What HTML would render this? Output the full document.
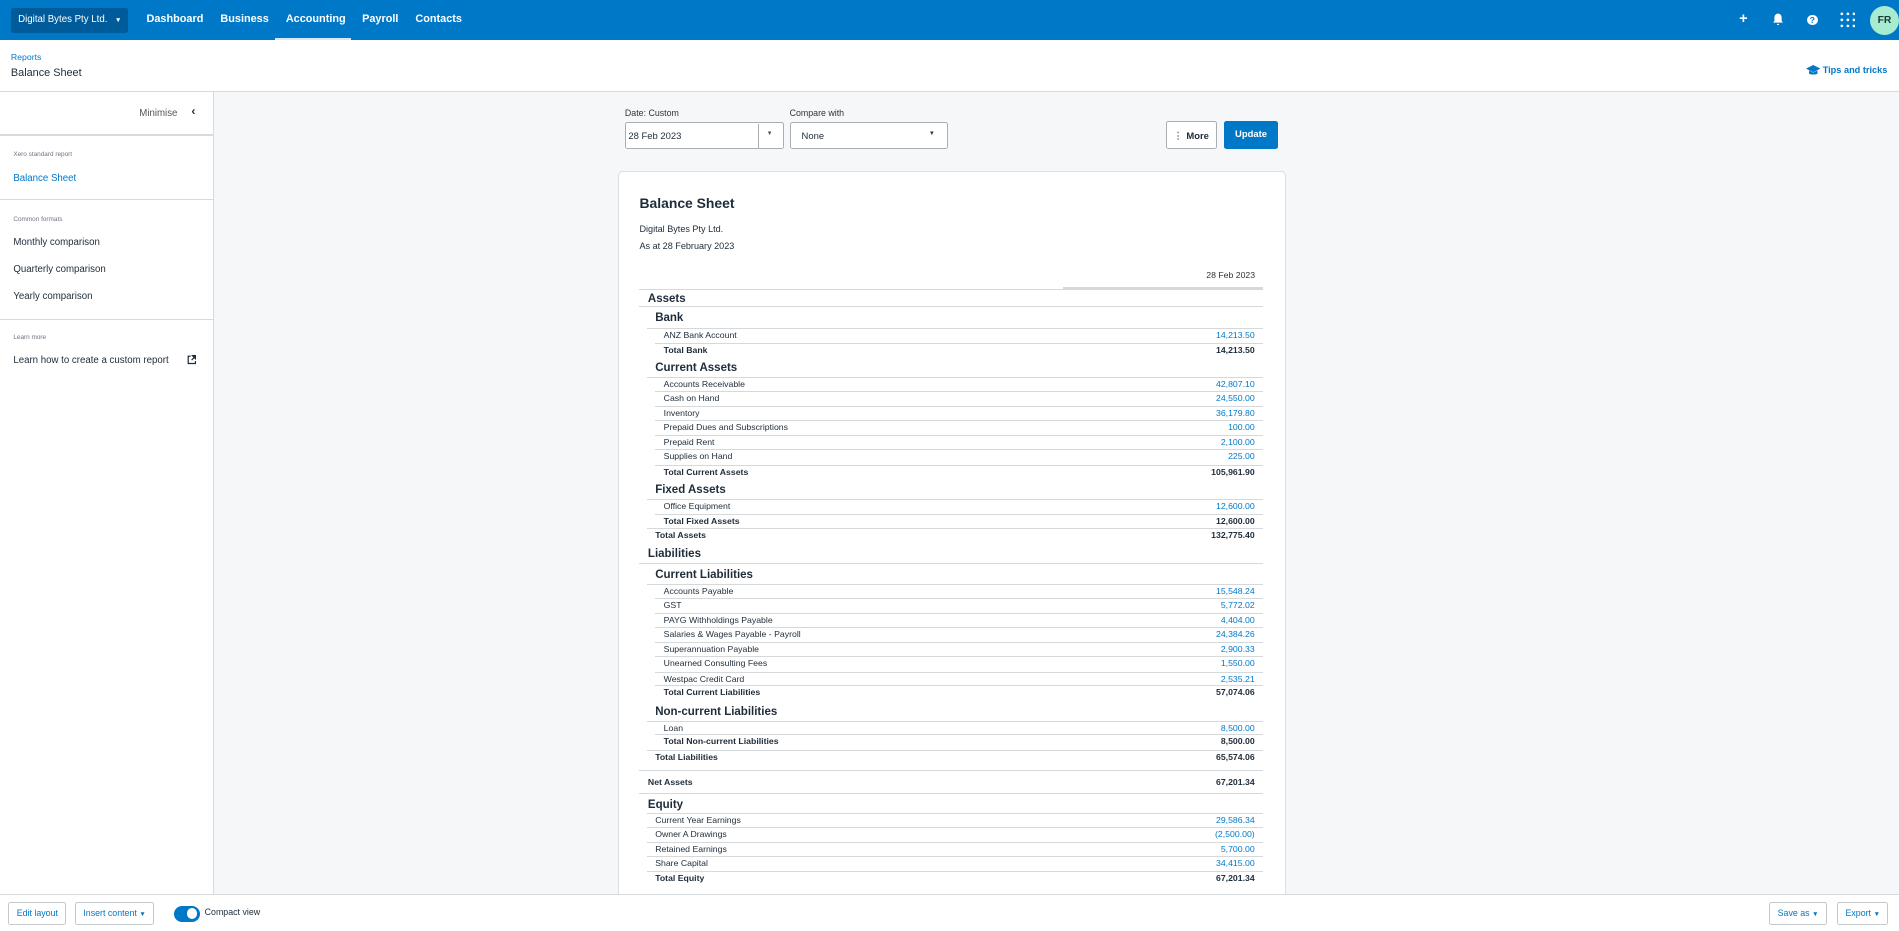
<!DOCTYPE html>
<html><head><meta charset="utf-8"><style>
*{box-sizing:border-box;margin:0;padding:0}
html,body{width:1899px;height:931px;overflow:hidden}
body{font-family:"Liberation Sans",Arial,sans-serif;color:#1e2c3a;background:#fff}
#w{position:relative;width:1568px;height:768px;zoom:1.21109;overflow:hidden;background:#f6f7f8}
.a{position:absolute}
.nav{left:0;top:0;width:1568px;height:33px;background:#0078c8}
.nl{color:#fff;font-size:9px;font-weight:bold;top:11px}
.hdr{left:0;top:33px;width:1568px;height:43px;background:#fff;border-bottom:1px solid #d8dbde}
.side{left:0;top:76px;width:177px;height:662px;background:#fff;border-right:1px solid #d8dbde}
.hl{left:0;width:176px;height:1px;background:#d8dbde}
.st{font-size:5.3px;color:#6b7580;left:11px}
.si{font-size:8px;color:#1e2c3a;left:11px}
.lbl{font-size:7.3px;color:#333}
.inp{background:#fff;border:1px solid #a8aeb4;border-radius:2px;height:22px;font-size:7.8px;color:#1e2c3a}
.card{left:510px;top:141px;width:552px;height:640px;background:#fff;border:1px solid #dcdfe3;border-radius:4px}
.r{position:absolute;right:525px;border-top:1px solid #d6d9dc;font-size:7.2px;color:#1e2c3a;line-height:11px;white-space:nowrap}
.r span{position:absolute;right:7px;color:#0078c8}
.r.t{font-weight:bold}
.r.t span{color:#1e2c3a}
.r.h{font-size:9.5px;font-weight:bold}
.r.nl2{border-top:none}
.foot{left:0;top:738px;width:1568px;height:30px;background:#fff;border-top:1px solid #d8dbde}
.btn{background:#fff;border:1px solid #c3c8cd;border-radius:2px;height:19px;font-size:7.3px;color:#0078c8;line-height:17px;padding:0 6px;top:745px}
</style></head><body><div id="w">
<div class="a nav"></div>
<div class="a" style="left:9px;top:7px;width:97px;height:20px;background:#005b9a;border-radius:2px;color:#fff;font-size:8px;line-height:20px;padding-left:6px">Digital Bytes Pty Ltd. <span style="font-size:5.5px;margin-left:4px">▼</span></div>
<div class="a nl" style="left:121px">Dashboard</div>
<div class="a nl" style="left:182px">Business</div>
<div class="a nl" style="left:236px">Accounting</div>
<div class="a nl" style="left:299px">Payroll</div>
<div class="a nl" style="left:343px">Contacts</div>
<div class="a" style="left:227px;top:31px;width:63px;height:2px;background:#d6e8f5"></div>
<div class="a" style="left:1436px;top:9px;color:#fff;font-size:12px;font-weight:bold">+</div>
<svg class="a" style="left:1463px;top:11px" width="10" height="11" viewBox="0 0 10 11"><path d="M5 0.5c-2 0-3 1.5-3 3.5v2.5L1 8h8L8 6.5V4c0-2-1-3.5-3-3.5z M4 9h2a1 1 0 0 1-2 0z" fill="#fff"/></svg>
<div class="a" style="left:1492px;top:12px;width:9px;height:9px;border-radius:50%;background:#fff;color:#0078c8;font-size:7px;font-weight:bold;text-align:center;line-height:9px">?</div>
<svg class="a" style="left:1519px;top:10px" width="13" height="13" viewBox="0 0 13 13" fill="#fff"><circle cx="1.5" cy="1.5" r="1.1"/><circle cx="6.5" cy="1.5" r="1.1"/><circle cx="11.5" cy="1.5" r="1.1"/><circle cx="1.5" cy="6.5" r="1.1"/><circle cx="6.5" cy="6.5" r="1.1"/><circle cx="11.5" cy="6.5" r="1.1"/><circle cx="1.5" cy="11.5" r="1.1"/><circle cx="6.5" cy="11.5" r="1.1"/><circle cx="11.5" cy="11.5" r="1.1"/></svg>
<div class="a" style="left:1544px;top:5px;width:24px;height:24px;border-radius:50%;background:#a7ebd0;color:#1e3a36;font-size:8.5px;font-weight:bold;text-align:center;line-height:24px">FR</div>

<div class="a hdr"></div>
<div class="a" style="left:9px;top:43px;font-size:7.2px;color:#0078c8">Reports</div>
<div class="a" style="left:9px;top:55px;font-size:9px;color:#1e2c3a">Balance Sheet</div>
<svg class="a" style="left:1491px;top:54px" width="12" height="9" viewBox="0 0 12 9"><path d="M6 0L0 3l6 3 6-3z M2.5 4.5v2.5c1 1.2 6 1.2 7 0V4.5L6 6.3z" fill="#0078c8"/></svg>
<div class="a" style="left:1505px;top:54px;font-size:7.6px;color:#0078c8;font-weight:bold">Tips and tricks</div>

<div class="a side"></div>
<div class="a" style="left:115px;top:89px;font-size:8px;color:#555">Minimise</div>
<div class="a" style="left:158px;top:86px;font-size:10px;color:#1e2c3a;font-weight:bold">‹</div>
<div class="a hl" style="top:111px"></div>
<div class="a st" style="top:125px">Xero standard report</div>
<div class="a si" style="top:143px;color:#0078c8">Balance Sheet</div>
<div class="a hl" style="top:164px"></div>
<div class="a st" style="top:178px">Common formats</div>
<div class="a si" style="top:196px">Monthly comparison</div>
<div class="a si" style="top:218px">Quarterly comparison</div>
<div class="a si" style="top:240px">Yearly comparison</div>
<div class="a hl" style="top:263px"></div>
<div class="a st" style="top:276px">Learn more</div>
<div class="a si" style="top:293px">Learn how to create a custom report</div>
<svg class="a" style="left:154px;top:293px" width="8" height="8" viewBox="0 0 8 8"><path d="M3 1H1v6h6V5" fill="none" stroke="#1e2c3a" stroke-width="1"/><path d="M4.5 0.5H7.5V3.5Z M7 1L3.8 4.2" fill="#1e2c3a" stroke="#1e2c3a" stroke-width="1"/></svg>

<div class="a lbl" style="left:516px;top:89px">Date: Custom</div>
<div class="a inp" style="left:516px;top:101px;width:131px;padding:6px 0 0 2px">28 Feb 2023</div>
<div class="a" style="left:626px;top:102px;width:1px;height:20px;background:#a8aeb4"></div>
<div class="a" style="left:633px;top:108px;font-size:5px;color:#555">▼</div>
<div class="a lbl" style="left:652px;top:89px">Compare with</div>
<div class="a inp" style="left:652px;top:101px;width:131px;padding:6px 0 0 9px">None</div>
<div class="a" style="left:767px;top:108px;font-size:5px;color:#333">▼</div>
<div class="a inp" style="left:963px;top:100px;width:42px;height:23px;font-weight:bold;font-size:7.8px;padding:7px 0 0 5px;border-color:#a8aeb4"><span style="color:#777;margin-right:3px">⋮</span>More</div>
<div class="a" style="left:1011px;top:100px;width:44px;height:23px;background:#0078c8;border-radius:2px;color:#fff;font-size:7.8px;font-weight:bold;text-align:center;line-height:23px">Update</div>

<div class="a card"></div>
<div class="a" style="left:528px;top:161px;font-size:11.5px;font-weight:bold;color:#1e2c3a">Balance Sheet</div>
<div class="a" style="left:528px;top:185px;font-size:7.5px">Digital Bytes Pty Ltd.</div>
<div class="a" style="left:528px;top:199px;font-size:7.5px">As at 28 February 2023</div>
<div class="a" style="left:996px;top:223px;font-size:7.2px;color:#333">28 Feb 2023</div>
<div class="a" style="left:878px;top:237px;width:165px;height:2px;background:#d6d9dc"></div>

<div class="r h" style="top:239px;left:528px;height:14px;padding:1px 0 0 7px;line-height:13px">Assets</div>
<div class="r h" style="top:253px;left:528px;height:18px;padding:3px 0 0 13px;line-height:13px">Bank</div>
<div class="r" style="top:271px;left:534px;height:12px;padding-left:14px">ANZ Bank Account<span>14,213.50</span></div>
<div class="r t" style="top:283px;left:541px;height:12px;padding-left:7px">Total Bank<span>14,213.50</span></div>
<div class="r h nl2" style="top:295px;left:534px;height:16px;padding:2px 0 0 7px;line-height:14px">Current Assets</div>
<div class="r" style="top:311px;left:534px;height:12px;padding-left:14px">Accounts Receivable<span>42,807.10</span></div>
<div class="r" style="top:323px;left:541px;height:12px;padding-left:7px">Cash on Hand<span>24,550.00</span></div>
<div class="r" style="top:335px;left:541px;height:12px;padding-left:7px">Inventory<span>36,179.80</span></div>
<div class="r" style="top:347px;left:541px;height:12px;padding-left:7px">Prepaid Dues and Subscriptions<span>100.00</span></div>
<div class="r" style="top:359px;left:541px;height:12px;padding-left:7px">Prepaid Rent<span>2,100.00</span></div>
<div class="r" style="top:371px;left:541px;height:13px;padding-left:7px">Supplies on Hand<span>225.00</span></div>
<div class="r t" style="top:384px;left:541px;height:12px;padding-left:7px">Total Current Assets<span>105,961.90</span></div>
<div class="r h nl2" style="top:396px;left:534px;height:16px;padding:3px 0 0 7px;line-height:13px">Fixed Assets</div>
<div class="r" style="top:412px;left:534px;height:12px;padding-left:14px">Office Equipment<span>12,600.00</span></div>
<div class="r t" style="top:424px;left:541px;height:12px;padding-left:7px">Total Fixed Assets<span>12,600.00</span></div>
<div class="r t" style="top:436px;left:534px;height:13px;padding-left:7px">Total Assets<span>132,775.40</span></div>
<div class="r h nl2" style="top:449px;left:528px;height:16px;padding:2px 0 0 7px;line-height:14px">Liabilities</div>
<div class="r h" style="top:465px;left:528px;height:17px;padding:2px 0 0 13px;line-height:14px">Current Liabilities</div>
<div class="r" style="top:482px;left:534px;height:12px;padding-left:14px">Accounts Payable<span>15,548.24</span></div>
<div class="r" style="top:494px;left:541px;height:12px;padding-left:7px">GST<span>5,772.02</span></div>
<div class="r" style="top:506px;left:541px;height:12px;padding-left:7px">PAYG Withholdings Payable<span>4,404.00</span></div>
<div class="r" style="top:518px;left:541px;height:12px;padding-left:7px">Salaries &amp; Wages Payable - Payroll<span>24,384.26</span></div>
<div class="r" style="top:530px;left:541px;height:12px;padding-left:7px">Superannuation Payable<span>2,900.33</span></div>
<div class="r" style="top:542px;left:541px;height:13px;padding-left:7px">Unearned Consulting Fees<span>1,550.00</span></div>
<div class="r" style="top:555px;left:541px;height:11px;padding-left:7px">Westpac Credit Card<span>2,535.21</span></div>
<div class="r t" style="top:566px;left:541px;height:13px;padding-left:7px">Total Current Liabilities<span>57,074.06</span></div>
<div class="r h nl2" style="top:579px;left:534px;height:16px;padding:2px 0 0 7px;line-height:14px">Non-current Liabilities</div>
<div class="r" style="top:595px;left:534px;height:11px;padding-left:14px">Loan<span>8,500.00</span></div>
<div class="r t" style="top:606px;left:541px;height:13px;padding-left:7px">Total Non-current Liabilities<span>8,500.00</span></div>
<div class="r t" style="top:619px;left:534px;height:17px;padding-left:7px">Total Liabilities<span>65,574.06</span></div>
<div class="r t" style="top:636px;left:528px;height:19px;padding:4px 0 0 7px">Net Assets<span style="top:4px">67,201.34</span></div>
<div class="r h" style="top:655px;left:528px;height:16px;padding:2px 0 0 7px;line-height:14px">Equity</div>
<div class="r" style="top:671px;left:534px;height:12px;padding-left:7px">Current Year Earnings<span>29,586.34</span></div>
<div class="r" style="top:683px;left:534px;height:12px;padding-left:7px">Owner A Drawings<span>(2,500.00)</span></div>
<div class="r" style="top:695px;left:534px;height:12px;padding-left:7px">Retained Earnings<span>5,700.00</span></div>
<div class="r" style="top:707px;left:534px;height:12px;padding-left:7px">Share Capital<span>34,415.00</span></div>
<div class="r t" style="top:719px;left:534px;height:12px;padding-left:7px;border-top-width:1.5px">Total Equity<span>67,201.34</span></div>

<div class="a foot"></div>
<div class="a btn" style="left:7px">Edit layout</div>
<div class="a btn" style="left:62px">Insert content <span style="font-size:5.5px">▼</span></div>
<div class="a" style="left:144px;top:748px;width:21px;height:13px;border-radius:7px;background:#0078c8"></div>
<div class="a" style="left:154px;top:750px;width:9px;height:9px;border-radius:50%;background:#fff"></div>
<div class="a" style="left:169px;top:749px;font-size:7.3px;color:#1e2c3a">Compact view</div>
<div class="a btn" style="left:1461px">Save as <span style="font-size:5.5px">▼</span></div>
<div class="a btn" style="left:1517px">Export <span style="font-size:5.5px">▼</span></div>
</div></body></html>
